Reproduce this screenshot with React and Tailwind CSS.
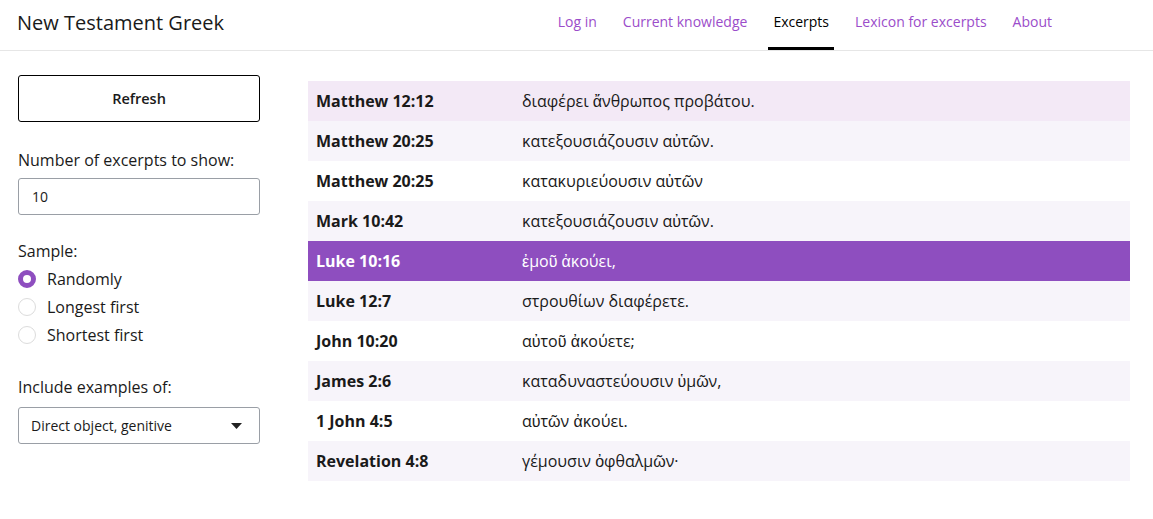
import { useState } from 'react';

const NAV = ['Log in', 'Current knowledge', 'Excerpts', 'Lexicon for excerpts', 'About'];

const EXCERPTS = [
  ['Matthew 12:12', 'διαφέρει ἄνθρωπος προβάτου.'],
  ['Matthew 20:25', 'κατεξουσιάζουσιν αὐτῶν.'],
  ['Matthew 20:25', 'κατακυριεύουσιν αὐτῶν'],
  ['Mark 10:42', 'κατεξουσιάζουσιν αὐτῶν.'],
  ['Luke 10:16', 'ἐμοῦ ἀκούει,'],
  ['Luke 12:7', 'στρουθίων διαφέρετε.'],
  ['John 10:20', 'αὐτοῦ ἀκούετε;'],
  ['James 2:6', 'καταδυναστεύουσιν ὑμῶν,'],
  ['1 John 4:5', 'αὐτῶν ἀκούει.'],
  ['Revelation 4:8', 'γέμουσιν ὀφθαλμῶν·'],
];

const SAMPLES = ['Randomly', 'Longest first', 'Shortest first'];

// row 0 is hovered, row 4 is selected, the rest alternate
const rowClass = (i) => {
  if (i === 4) return 'bg-[#8e4ebf] text-white';
  if (i === 0) return 'bg-[#f3e9f6] text-[#1a1a1a]';
  return i % 2 === 1 ? 'bg-[#f7f4fa] text-[#1a1a1a]' : 'bg-white text-[#1a1a1a]';
};

export default function App() {
  const [sample, setSample] = useState('Randomly');

  return (
    <div className="min-h-[519px] bg-white font-['Open_Sans',sans-serif] text-[#1a1a1a]">
      <header className="flex h-[51px] items-stretch justify-between border-b border-[#e6e6e6]">
        <div className="flex items-center pl-[17px] pb-[4px] text-[20px]">New Testament Greek</div>
        <nav className="flex items-stretch gap-[16px] pr-[96px]">
          {NAV.map((item) => (
            <a
              key={item}
              href="#"
              className={`flex items-center px-[5px] pb-[4px] text-[14px] border-b-[3px] ${
                item === 'Excerpts' ? 'border-black text-black' : 'border-transparent text-[#9b4dca]'
              }`}
            >
              {item}
            </a>
          ))}
        </nav>
      </header>

      <div className="flex gap-[48px]">
        <aside className="w-[242px] shrink-0 ml-[18px] pt-[24px]">
          <button className="h-[47px] w-full rounded-[3px] border border-black text-[14.5px] font-semibold">
            Refresh
          </button>

          <label className="mt-[26px] block text-[16px]">Number of excerpts to show:</label>
          <input
            defaultValue="10"
            className="mt-[6px] h-[37px] w-full rounded-[3px] border border-[#9a9fa6] px-[13px] text-[14px] outline-none"
          />

          <div className="mt-[24px] text-[16px]">Sample:</div>
          <div className="mt-[2px] flex flex-col">
            {SAMPLES.map((s) => (
              <label key={s} className="flex h-[28px] cursor-pointer items-center gap-[11px] text-[16px]" onClick={() => setSample(s)}>
                <span
                  className={`h-[18px] w-[18px] rounded-full bg-white ${
                    sample === s ? 'border-[5px] border-[#8e4ebf]' : 'border border-[#dcdcdc]'
                  }`}
                />
                {s}
              </label>
            ))}
          </div>

          <div className="mt-[26px] text-[16px]">Include examples of:</div>
          <div className="mt-[8px] flex h-[37px] w-full items-center justify-between rounded-[3px] border border-[#9a9fa6] pl-[12px] pr-[17px] text-[14px]">
            <span>Direct object, genitive</span>
            <svg width="11" height="6" viewBox="0 0 11 6">
              <path d="M0 0h11L5.5 6z" fill="#222" />
            </svg>
          </div>
        </aside>

        <main className="w-[822px] pt-[30px]">
          {EXCERPTS.map(([ref, text], i) => (
            <div key={i} className={`flex h-[40px] items-center ${rowClass(i)}`}>
              <div className="w-[214px] shrink-0 pl-[8px] text-[16px] font-bold">{ref}</div>
              <div className="text-[16px]">{text}</div>
            </div>
          ))}
        </main>
      </div>
    </div>
  );
}
